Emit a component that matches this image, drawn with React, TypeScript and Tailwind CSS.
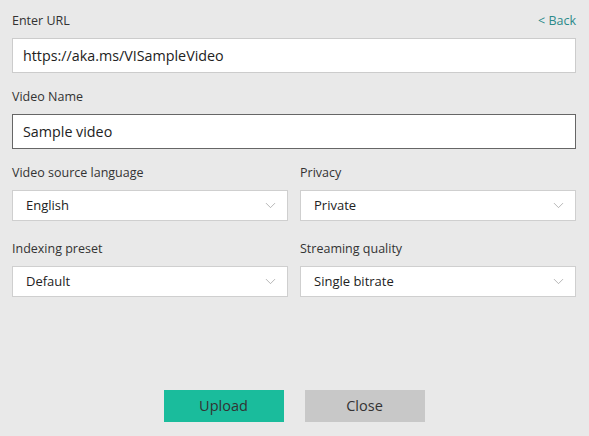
import { ChevronDown } from 'lucide-react';

const font = { fontFamily: '"Segoe UI", "Open Sans", "Noto Sans", sans-serif' };

function Select({ value }: { value: string }) {
  return (
    <div className="flex h-[31px] items-center justify-between border border-[#cfcfcf] bg-white pl-[13px] pr-[8px]">
      <span className="text-[13px] text-[#222]">{value}</span>
      <ChevronDown size={17} strokeWidth={1} className="text-[#999]" />
    </div>
  );
}

function Label({ children }: { children: React.ReactNode }) {
  return <div className="mb-[9px] h-4 text-[12.5px] leading-4 text-[#333]">{children}</div>;
}

export default function App() {
  return (
    <div className="h-[436px] w-full bg-[#e9e9e9] pl-3 pr-[13px] pt-[13px]" style={font}>
      <div className="mb-[9px] flex h-4 items-center justify-between text-[12.5px] leading-4">
        <span className="text-[#333]">Enter URL</span>
        <span className="text-[#2c8a8a]">&lt; Back</span>
      </div>
      <div className="flex h-[35px] items-center border border-[#cccccc] bg-white px-[10px] text-[14.3px] text-[#222]">
        https://aka.ms/VISampleVideo
      </div>

      <div className="mt-4">
        <Label>Video Name</Label>
        <div className="flex h-[35px] items-center border border-[#666] bg-white px-[10px] text-[14.3px] text-[#222]">
          Sample video
        </div>
      </div>

      <div className="mt-4 grid grid-cols-2 gap-x-[12px]">
        <div>
          <Label>Video source language</Label>
          <Select value="English" />
        </div>
        <div>
          <Label>Privacy</Label>
          <Select value="Private" />
        </div>
        <div className="mt-[20px]">
          <Label>Indexing preset</Label>
          <Select value="Default" />
        </div>
        <div className="mt-[20px]">
          <Label>Streaming quality</Label>
          <Select value="Single bitrate" />
        </div>
      </div>

      <div className="mt-[93px] flex justify-center gap-[21px]">
        <button type="button" className="h-8 w-[120px] bg-[#1abc9c] text-[14.5px] text-[#333]">
          Upload
        </button>
        <button type="button" className="h-8 w-[120px] bg-[#c8c8c8] text-[14.5px] text-[#333]">
          Close
        </button>
      </div>
    </div>
  );
}
